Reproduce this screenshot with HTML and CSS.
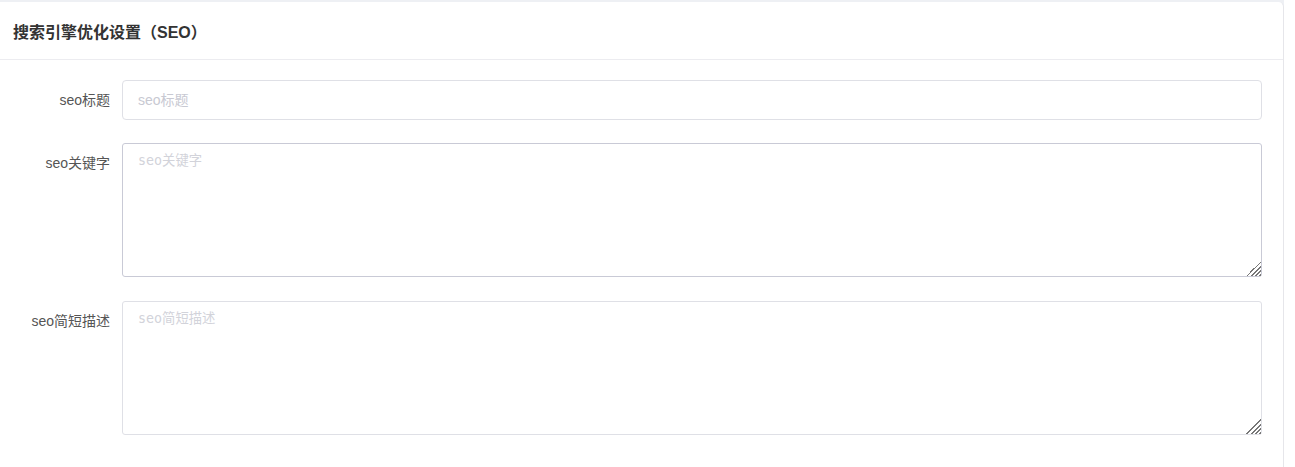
FILE: index.html
```html
<!DOCTYPE html>
<html lang="zh-CN">
<head>
    <meta charset="UTF-8">
    <title>搜索引擎优化设置</title>
    <link rel="stylesheet" href="styles.css">
</head>
<body>
    <div class="page">
        <div class="card">
            <div class="card-header">搜索引擎优化设置（SEO）</div>
            <div class="card-body">
                <div class="form-row">
                    <label class="form-label" for="seo-title">seo标题</label>
                    <input class="form-input" id="seo-title" type="text" placeholder="seo标题">
                </div>
                <div class="form-row form-row-area">
                    <label class="form-label" for="seo-keywords">seo关键字</label>
                    <textarea class="form-textarea form-textarea-active" id="seo-keywords" placeholder="seo关键字"></textarea>
                </div>
                <div class="form-row form-row-area">
                    <label class="form-label" for="seo-desc">seo简短描述</label>
                    <textarea class="form-textarea" id="seo-desc" placeholder="seo简短描述"></textarea>
                </div>
            </div>
        </div>
    </div>
</body>
</html>
```

FILE: styles.css
```css
body {
    margin: 0;
    background: #fff;
    font-family: 'Liberation Sans', 'Noto Sans CJK SC', sans-serif;
}

.page {
    width: 1284px;
    padding-top: 2px;
    background: #eef0f4;
}

.card {
    background: #fff;
    border-right: 1px solid #e6e6ea;
    border-radius: 0 5px 0 0;
    min-height: 465px;
    box-sizing: border-box;
}

.card-header {
    height: 57px;
    padding-left: 13px;
    display: flex;
    align-items: center;
    border-bottom: 1px solid #ececf0;
    font-size: 16px;
    font-weight: bold;
    color: #333;
}

.card-body {
    padding: 20px 21px 20px 0;
}

.form-row {
    display: flex;
    gap: 12px;
    margin-bottom: 23px;
}

.form-row-area {
    margin-bottom: 24px;
}

.form-label {
    width: 110px;
    flex-shrink: 0;
    padding-top: 10px;
    line-height: 20px;
    text-align: right;
    font-size: 14px;
    color: #555;
}

.form-input {
    flex: 1;
    height: 40px;
    box-sizing: border-box;
    margin: 0;
    padding: 0 15px;
    border: 1px solid #dfe0e6;
    border-radius: 4px;
    font-family: inherit;
    font-size: 14px;
    color: #333;
    outline: none;
}

.form-textarea {
    flex: 1;
    display: block;
    height: 134px;
    box-sizing: border-box;
    margin: 0;
    padding: 6px 15px;
    border: 1px solid #dfe0e6;
    border-radius: 3px;
    font-family: 'DejaVu Sans Mono', 'Noto Sans CJK SC', monospace;
    font-size: 13.33px;
    color: #333;
    outline: none;
}

.form-textarea::-webkit-scrollbar {
    width: 14px;
    height: 14px;
}

.form-textarea::-webkit-resizer {
    background:
        linear-gradient(135deg, #fff 50%, transparent 50%),
        repeating-linear-gradient(135deg, #fff 0 1.5px, #777 1.5px 3px);
}

.form-textarea-active {
    border-color: #c9cad6;
}

.form-input::placeholder {
    color: #c8c9d2;
}

.form-textarea::placeholder {
    color: #d2d3da;
}
```
